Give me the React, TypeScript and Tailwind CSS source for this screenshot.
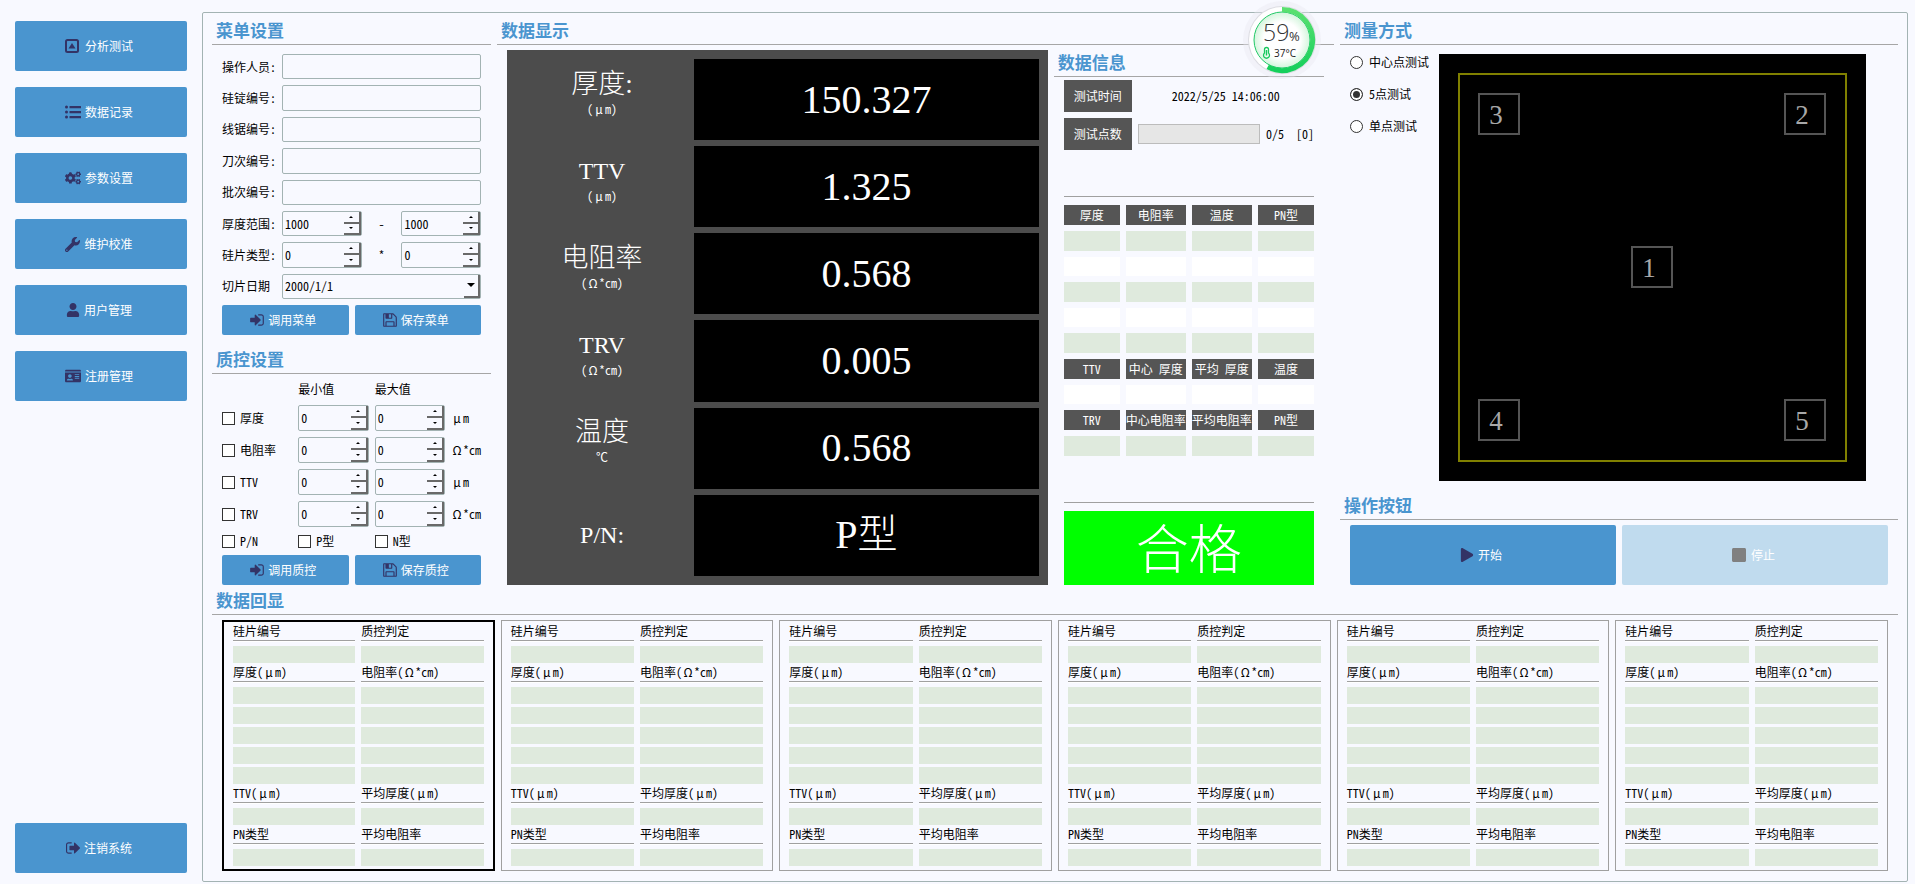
import { useState, type ReactNode } from "react";
import clsx from "clsx";
import { FaCogs, FaIdCard, FaPlay, FaStop, FaUser, FaWrench } from "react-icons/fa";

const SIGN_IN =
  "M1184 896q0 26-19 45l-544 544q-19 19-45 19t-45-19-19-45v-288h-448q-26 0-45-19t-19-45v-384q0-26 19-45t45-19h448v-288q0-26 19-45t45-19 45 19l544 544q19 19 19 45zM1536 544v704q0 119-84.500 203.500t-203.500 84.500h-320q-13 0-22.500-9.500t-9.500-22.500q0-4-1-20t-.5-26.500 3-23.500 10-19.500 20.500-6.500h320q66 0 113-47t47-113v-704q0-66-47-113t-113-47h-312l-11.500-1-11.500-3-8-5.500-7-9-2-13.500q0-4-1-20t-.5-26.500 3-23.500 10-19.500 20.500-6.500h320q119 0 203.500 84.500t84.500 203.500z";
const SIGN_OUT =
  "M640 1440q0 4 1 20t.5 26.500-3 23.500-10 19.500-20.500 6.500h-320q-119 0-203.500-84.500t-84.500-203.500v-704q0-119 84.500-203.500t203.500-84.500h320q13 0 22.500 9.500t9.500 22.500q0 4 1 20t.5 26.500-3 23.500-10 19.500-20.500 6.500h-320q-66 0-113 47t-47 113v704q0 66 47 113t113 47h312l11.500 1 11.500 3 8 5.500 7 9 2 13.500zM1568 896q0 26-19 45l-544 544q-19 19-45 19t-45-19-19-45v-288h-448q-26 0-45-19t-19-45v-384q0-26 19-45t45-19h448v-288q0-26 19-45t45-19 45 19l544 544q19 19 19 45z";
const FLOPPY =
  "M384 1536h768v-384h-768v384zM1280 1536h128v-896q0-14-10-38.500t-20-34.500l-281-281q-10-10-34-20t-39-10v416q0 40-28 68t-68 28h-576q-40 0-68-28t-28-68v-416h-128v1280h128v-416q0-40 28-68t68-28h832q40 0 68 28t28 68v416zM896 608v-320q0-13-9.500-22.500t-22.500-9.500h-192q-13 0-22.500 9.500t-9.500 22.500v320q0 13 9.500 22.500t22.500 9.500h192q13 0 22.500-9.500t9.500-22.500zM1536 640v928q0 40-28 68t-68 28h-1344q-40 0-68-28t-28-68v-1344q0-40 28-68t68-28h928q40 0 88 20t76 48l280 280q28 28 48 76t20 88z";

const NAV = [
  { label: "分析测试", icon: <CaretSquareIcon /> },
  { label: "数据记录", icon: <ListIcon /> },
  { label: "参数设置", icon: <FaCogs size={16} /> },
  { label: "维护校准", icon: <FaWrench size={15} /> },
  { label: "用户管理", icon: <FaUser size={14} /> },
  { label: "注册管理", icon: <FaIdCard size={16} /> },
];

const TEXT_FIELDS = ["操作人员:", "硅锭编号:", "线锯编号:", "刀次编号:", "批次编号:"];

const LIMITS = [
  { name: "厚度", unit: "μm" },
  { name: "电阻率", unit: "Ω*cm" },
  { name: "TTV", unit: "μm" },
  { name: "TRV", unit: "Ω*cm" },
];

const READINGS = [
  { name: "厚度:", unit: "(μm)", value: "150.327" },
  { name: "TTV", unit: "(μm)", value: "1.325" },
  { name: "电阻率", unit: "(Ω*cm)", value: "0.568" },
  { name: "TRV", unit: "(Ω*cm)", value: "0.005" },
  { name: "温度", unit: "℃", value: "0.568" },
  { name: "P/N:", unit: "", value: "P型" },
];

// string[] is a header row, the others are empty value rows
const INFO_ROWS: (string[] | "green" | "white")[] = [
  ["厚度", "电阻率", "温度", "PN型"],
  "green",
  "white",
  "green",
  "white",
  "green",
  ["TTV", "中心 厚度", "平均 厚度", "温度"],
  "white",
  ["TRV", "中心电阻率", "平均电阻率", "PN型"],
  "green",
];

const MODES = ["中心点测试", "5点测试", "单点测试"];

const POINTS = [
  { n: 1, x: 193, y: 193 },
  { n: 2, x: 346, y: 40 },
  { n: 3, x: 40, y: 40 },
  { n: 4, x: 40, y: 346 },
  { n: 5, x: 346, y: 346 },
];

const HISTORY_COLUMNS = [
  [
    { label: "硅片编号", count: 1 },
    { label: "厚度(μm)", count: 5 },
    { label: "TTV(μm)", count: 1 },
    { label: "PN类型", count: 1 },
  ],
  [
    { label: "质控判定", count: 1 },
    { label: "电阻率(Ω*cm)", count: 5 },
    { label: "平均厚度(μm)", count: 1 },
    { label: "平均电阻率", count: 1 },
  ],
];

function Glyph({ d, width = 1536 }: { d: string; width?: number }) {
  return (
    <svg viewBox={`0 0 ${width} 1792`} className="h-4 w-[14px]" fill="currentColor">
      <path d={d} />
    </svg>
  );
}

function CaretSquareIcon() {
  return (
    <svg viewBox="0 0 14 14" className="mr-0.5 size-[14px]" fill="currentColor">
      <rect x="1" y="1" width="12" height="12" rx="1.500" fill="none" stroke="currentColor" strokeWidth="2" />
      <path d="M3.500 9.500 L7 4 L10.500 9.500z" />
    </svg>
  );
}

function ListIcon() {
  return (
    <svg viewBox="0 0 16 14" className="h-[14px] w-4" fill="currentColor">
      {[2, 7, 12].map((y) => (
        <g key={y}>
          <circle cx="1.500" cy={y} r="1.500" />
          <rect x="4.500" y={y - 1} width="11.500" height="2.200" rx="0.300" />
        </g>
      ))}
    </svg>
  );
}

// Greek letters take a full CJK cell
function Unit({ text }: { text: string }) {
  return text.split(/([μΩ])/).map((part, i) =>
    part === "μ" || part === "Ω" ? (
      <span key={i} className="inline-block w-3 text-center">
        {part}
      </span>
    ) : (
      part
    ),
  );
}

function Heading({ children }: { children: ReactNode }) {
  return (
    <h2 className="h-[27px] shrink-0 border-b border-[#a6a6a6] pl-1 text-[17px] leading-6 font-bold text-[#4a95cf]">
      {children}
    </h2>
  );
}

function ActionButton({
  icon,
  label,
  className,
  disabled,
}: {
  icon: ReactNode;
  label: string;
  className?: string;
  disabled?: boolean;
}) {
  return (
    <button
      disabled={disabled}
      className={clsx(
        "flex items-center justify-center gap-1 rounded-xs pr-1 text-white",
        disabled ? "bg-[#c0dbee]" : "bg-[#4a95cf]",
        className,
      )}
    >
      <span className={disabled ? "text-[#808080]" : "text-[#333366]"}>{icon}</span>
      {label}
    </button>
  );
}

function SpinBox({ label, initial }: { label: string; initial: number }) {
  const [value, setValue] = useState(initial);
  const step =
    "flex flex-1 items-center justify-center border-r-2 border-b-2 border-r-[#696969] border-b-[#696969]";

  return (
    <div className="flex min-w-0 rounded-xs border border-[#a3b3b3]">
      <input
        type="number"
        aria-label={label}
        value={value}
        onChange={(e) => setValue(Number(e.target.value))}
        className="w-0 min-w-0 flex-1 pl-0.5 outline-none [&::-webkit-inner-spin-button]:appearance-none"
      />
      <div className="flex w-[17px] flex-col">
        <button aria-label={`${label} +`} className={step} onClick={() => setValue(value + 1)}>
          <svg width="4" height="2" viewBox="0 0 4 2">
            <path d="M0 2 L2 0 L4 2z" />
          </svg>
        </button>
        <button aria-label={`${label} -`} className={step} onClick={() => setValue(value - 1)}>
          <svg width="4" height="2" viewBox="0 0 4 2">
            <path d="M0 0 L2 2 L4 0z" />
          </svg>
        </button>
      </div>
    </div>
  );
}

function Check({ label }: { label: string }) {
  return (
    <label className="flex items-center gap-[5px] whitespace-nowrap">
      <input
        type="checkbox"
        className="size-[13px] shrink-0 appearance-none border border-[#333] bg-white checked:bg-[#333]"
      />
      {label}
    </label>
  );
}

function MenuForm() {
  return (
    <div className="mt-[9px] flex flex-1 flex-col gap-1.5 px-[10px]">
      {TEXT_FIELDS.map((name) => (
        <label key={name} className="grid flex-1 grid-cols-[54px_1fr] items-stretch gap-1.5">
          <span className="self-center">{name}</span>
          <input type="text" className="min-w-0 rounded-xs border border-[#a3b3b3] px-1 outline-none" />
        </label>
      ))}
      <div className="grid flex-1 grid-cols-[54px_1fr] gap-1.5">
        <span className="self-center">厚度范围:</span>
        <div className="grid grid-cols-[2fr_1fr_2fr]">
          <SpinBox label="最小厚度" initial={1000} />
          <span className="self-center text-center">-</span>
          <SpinBox label="最大厚度" initial={1000} />
        </div>
      </div>
      <div className="grid flex-1 grid-cols-[54px_1fr] gap-1.5">
        <span className="self-center">硅片类型:</span>
        <div className="grid grid-cols-[2fr_1fr_2fr]">
          <SpinBox label="硅片长度" initial={0} />
          <span className="self-center text-center">*</span>
          <SpinBox label="硅片宽度" initial={0} />
        </div>
      </div>
      <label className="grid flex-1 grid-cols-[54px_1fr] gap-1.5">
        <span className="self-center">切片日期</span>
        <span className="relative flex rounded-xs border border-[#a3b3b3]">
          <select className="w-full appearance-none pl-0.5 outline-none">
            <option>2000/1/1</option>
          </select>
          <span className="pointer-events-none absolute inset-y-0 right-0 flex w-4 items-center justify-center border-r-2 border-b-2 border-[#696969]">
            <svg width="8" height="4" viewBox="0 0 8 4">
              <path d="M0 0 H8 L4 4z" />
            </svg>
          </span>
        </span>
      </label>
      <div className="grid grid-cols-2 gap-1.5">
        <ActionButton className="h-[30px]" icon={<Glyph d={SIGN_IN} />} label="调用菜单" />
        <ActionButton className="h-[30px]" icon={<Glyph d={FLOPPY} />} label="保存菜单" />
      </div>
    </div>
  );
}

function QualityForm() {
  return (
    <div className="mt-1.5 flex flex-col gap-1.5 px-[10px]">
      <div className="grid grid-cols-[1fr_1fr_1fr_30px] gap-1.5">
        <span className="col-start-2 h-[19px] leading-[18px]">最小值</span>
        <span className="h-[19px] leading-[18px]">最大值</span>
      </div>
      {LIMITS.map(({ name, unit }) => (
        <div key={name} className="grid h-[26px] grid-cols-[1fr_1fr_1fr_30px] gap-1.5">
          <Check label={name} />
          <SpinBox label={`${name}最小值`} initial={0} />
          <SpinBox label={`${name}最大值`} initial={0} />
          <span className="self-center whitespace-nowrap">
            <Unit text={unit} />
          </span>
        </div>
      ))}
      <div className="grid h-4 grid-cols-[1fr_1fr_1fr_30px] gap-1.5">
        <Check label="P/N" />
        <Check label="P型" />
        <Check label="N型" />
      </div>
      <div className="grid grid-cols-2 gap-1.5">
        <ActionButton className="h-[30px]" icon={<Glyph d={SIGN_IN} />} label="调用质控" />
        <ActionButton className="h-[30px]" icon={<Glyph d={FLOPPY} />} label="保存质控" />
      </div>
    </div>
  );
}

function Readings() {
  return (
    <dl className="grid auto-rows-fr gap-1.5 bg-[#4c4c4c] p-[9px] text-white">
      {READINGS.map(({ name, unit, value }) => (
        <div key={name} className="grid grid-cols-[1fr_2fr] gap-1.5">
          <dt
            className={clsx(
              "flex flex-col items-center justify-center font-['Liberation_Serif','Noto_Sans_CJK_SC',serif] leading-8 font-light",
              /^[A-Z]/.test(name) ? "text-[24px]" : "text-[27px]",
              unit && "pb-[14px]",
            )}
          >
            {name}
            {unit && (
              <span className="font-['Noto_Sans_CJK_SC',sans-serif] text-xs leading-[18px] font-normal">
                <Unit text={unit} />
              </span>
            )}
          </dt>
          <dd className="flex items-center justify-center bg-black font-['Liberation_Serif','Noto_Sans_CJK_SC',serif] text-[40px] leading-[48px] font-light">
            {value}
          </dd>
        </div>
      ))}
    </dl>
  );
}

function InfoPanel() {
  return (
    <section className="flex min-w-0 flex-col">
      <Heading>数据信息</Heading>
      <div className="mt-[3px] flex flex-1 flex-col px-[10px]">
        <div className="flex items-center gap-1.5">
          <span className="h-8 w-[68px] bg-[#555] text-center leading-8 text-white">测试时间</span>
          <time className="flex-1 text-center">2022/5/25 14:06:00</time>
        </div>
        <div className="mt-1.5 flex items-center gap-1.5">
          <span className="h-8 w-[68px] bg-[#555] text-center leading-8 text-white">测试点数</span>
          <div
            role="progressbar"
            aria-label="测试点数"
            aria-valuenow={0}
            aria-valuemax={5}
            className="h-5 flex-1 border border-[#bcbcbc] bg-[#e6e6e6]"
          />
          <span>0/5</span>
          <span className="pl-1.5">[0]</span>
        </div>
        <div className="flex-1" />
        <hr className="border-[#a0a0a0]" />
        <table className="-mx-1.5 mt-0.5 -mb-1.5 table-fixed border-separate border-spacing-1.5">
          <colgroup>
            <col className="w-[56px]" />
            <col className="w-[60px]" />
            <col className="w-[60px]" />
            <col className="w-[56px]" />
          </colgroup>
          <tbody>
            {INFO_ROWS.map((row, i) =>
              typeof row === "string" ? (
                <tr key={i} className={row === "green" ? "h-5" : "h-[19px]"}>
                  {[0, 1, 2, 3].map((c) => (
                    <td key={c} className={clsx("p-0", row === "green" ? "bg-[#dfeadd]" : "bg-white")} />
                  ))}
                </tr>
              ) : (
                <tr key={i} className="h-5">
                  {row.map((text) => (
                    <th
                      key={text}
                      className="bg-[#555] p-0 leading-4 font-normal whitespace-nowrap text-white"
                    >
                      {text}
                    </th>
                  ))}
                </tr>
              ),
            )}
          </tbody>
        </table>
        <div className="flex-1" />
        <hr className="border-[#a0a0a0]" />
        <output className="mt-2 flex h-[74px] items-center justify-center bg-[#00ff00] pb-1 text-[53px] leading-none font-light text-white">
          合格
        </output>
      </div>
    </section>
  );
}

function WaferMap() {
  return (
    <svg viewBox="0 0 427 427" preserveAspectRatio="xMinYMin meet" className="h-[427px] w-full">
      <rect width="427" height="427" />
      <rect x="20" y="20" width="387" height="387" fill="none" stroke="#808000" strokeWidth="2" />
      {POINTS.map(({ n, x, y }) => (
        <g key={n}>
          <rect x={x} y={y} width="40" height="40" fill="none" stroke="#555" strokeWidth="2" />
          <text
            x={x + 17}
            y={y + 30}
            textAnchor="middle"
            fill="#a8a8a8"
            className="font-['Liberation_Serif',serif] text-[27px]"
          >
            {n}
          </text>
        </g>
      ))}
    </svg>
  );
}

function MeasurePanel() {
  const [mode, setMode] = useState("5点测试");

  return (
    <section className="flex min-w-0 flex-col">
      <Heading>测量方式</Heading>
      <div className="mt-[9px] flex gap-2.5 pl-[10px]">
        <div className="flex w-[79px] shrink-0 flex-col gap-4">
          {MODES.map((name) => (
            <label key={name} className="flex h-4 items-center gap-1.5 whitespace-nowrap">
              <input
                type="radio"
                name="mode"
                checked={mode === name}
                onChange={() => setMode(name)}
                className="size-[13px] shrink-0 appearance-none rounded-full border border-[#333] bg-white checked:bg-[#333] checked:shadow-[inset_0_0_0_2px_#fff]"
              />
              {name}
            </label>
          ))}
        </div>
        <div className="min-w-0 flex-1">
          <WaferMap />
        </div>
      </div>
      <div className="mt-3">
        <Heading>操作按钮</Heading>
      </div>
      <div className="mt-[5px] grid flex-1 grid-cols-2 gap-1.5 px-[10px]">
        <ActionButton icon={<FaPlay size={14} />} label="开始" />
        <ActionButton disabled icon={<FaStop size={16} />} label="停止" />
      </div>
    </section>
  );
}

function HistoryCard({ active }: { active: boolean }) {
  return (
    <article
      className={clsx(
        "grid grid-cols-2 gap-1.5 px-[9px]",
        active ? "border-2 border-black py-[3px]" : "border border-[#a0a0a0] py-1",
      )}
    >
      {HISTORY_COLUMNS.map((groups, i) => (
        <div key={i} className="flex min-w-0 flex-col gap-[3px]">
          {groups.map(({ label, count }) => (
            <div key={label} className="flex flex-col gap-[3px]">
              <h3 className="mb-0.5 h-4 border-b border-[#a0a0a0] leading-3 whitespace-nowrap shadow-[0_1px_0_#fff]">
                <Unit text={label} />
              </h3>
              {Array.from({ length: count }, (_, n) => (
                <div key={n} className="h-[17px] bg-[#dfeadd]" />
              ))}
            </div>
          ))}
        </div>
      ))}
    </article>
  );
}

function LoadBadge() {
  return (
    <svg
      viewBox="0 0 80 80"
      className="absolute top-0 left-[1242px] size-20 font-['Open_Sans',sans-serif]"
    >
      <defs>
        <radialGradient id="badge-fill">
          <stop offset="0.65" stopColor="#fff" />
          <stop offset="1" stopColor="#d3f5dc" />
        </radialGradient>
        <linearGradient id="badge-arc" x1="0" y1="0" x2="0" y2="1">
          <stop offset="0" stopColor="#5ae070" />
          <stop offset="1" stopColor="#16cf5c" />
        </linearGradient>
      </defs>
      <circle cx="40" cy="40" r="39" fill="#e8e8f0" opacity="0.4" />
      <circle cx="40" cy="40" r="34" fill="#dcdce2" />
      <circle cx="40" cy="40" r="33" fill="#fff" />
      <circle cx="40" cy="40" r="28" fill="url(#badge-fill)" stroke="#22c968" />
      <path
        d="M40 9.500 A30.500 30.500 0 1 1 25.700 66.900"
        fill="none"
        stroke="url(#badge-arc)"
        strokeWidth="5"
      />
      <text x="21" y="41" fill="#333" className="text-[23px] font-light">
        59
      </text>
      <text x="47" y="41" fill="#333" className="text-[13px]">
        %
      </text>
      <path
        d="M22.500 53 V49.500 a2 2 0 0 1 4 0 V53 a3 3 0 1 1 -4 0z"
        fill="none"
        stroke="#16c95c"
        strokeWidth="1.300"
      />
      <path d="M24.500 50 V55.500" stroke="#16c95c" strokeWidth="1.500" />
      <text x="32" y="57" fill="#222" className="text-[10px]">
        37°C
      </text>
    </svg>
  );
}

export default function App() {
  return (
    <div className="relative flex min-h-screen gap-[15px] bg-[#f8f9ff] pr-[7px] pl-[15px] font-['Noto_Sans_CJK_SC',sans-serif] text-xs text-black [font-feature-settings:'hwid']">
      <nav className="flex w-[172px] shrink-0 flex-col gap-4 pt-[21px] pb-[11px]">
        {NAV.map(({ label, icon }) => (
          <ActionButton key={label} className="h-[50px]" icon={icon} label={label} />
        ))}
        <ActionButton
          className="mt-auto h-[50px]"
          icon={<Glyph d={SIGN_OUT} width={1568} />}
          label="注销系统"
        />
      </nav>

      <main className="mt-3 mb-0.5 flex min-w-0 flex-1 flex-col rounded-xs border border-[#a3b3b3] px-[9px] pt-[5px] pb-[10px]">
        <div className="grid flex-1 grid-cols-[minmax(0,1fr)_minmax(0,3fr)_minmax(0,2fr)] gap-1.5">
          <section className="flex flex-col">
            <Heading>菜单设置</Heading>
            <MenuForm />
            <div className="mt-3">
              <Heading>质控设置</Heading>
            </div>
            <QualityForm />
          </section>

          <section className="flex flex-col">
            <Heading>数据显示</Heading>
            <div className="mt-[5px] grid flex-1 grid-cols-[minmax(0,2fr)_minmax(0,1fr)] gap-1.5 px-[10px]">
              <Readings />
              <InfoPanel />
            </div>
          </section>

          <MeasurePanel />
        </div>

        <section className="mt-[3px]">
          <Heading>数据回显</Heading>
          <div className="mt-[5px] grid grid-cols-6 gap-1.5 px-[10px]">
            {[0, 1, 2, 3, 4, 5].map((n) => (
              <HistoryCard key={n} active={n === 0} />
            ))}
          </div>
        </section>
      </main>

      <LoadBadge />
    </div>
  );
}
